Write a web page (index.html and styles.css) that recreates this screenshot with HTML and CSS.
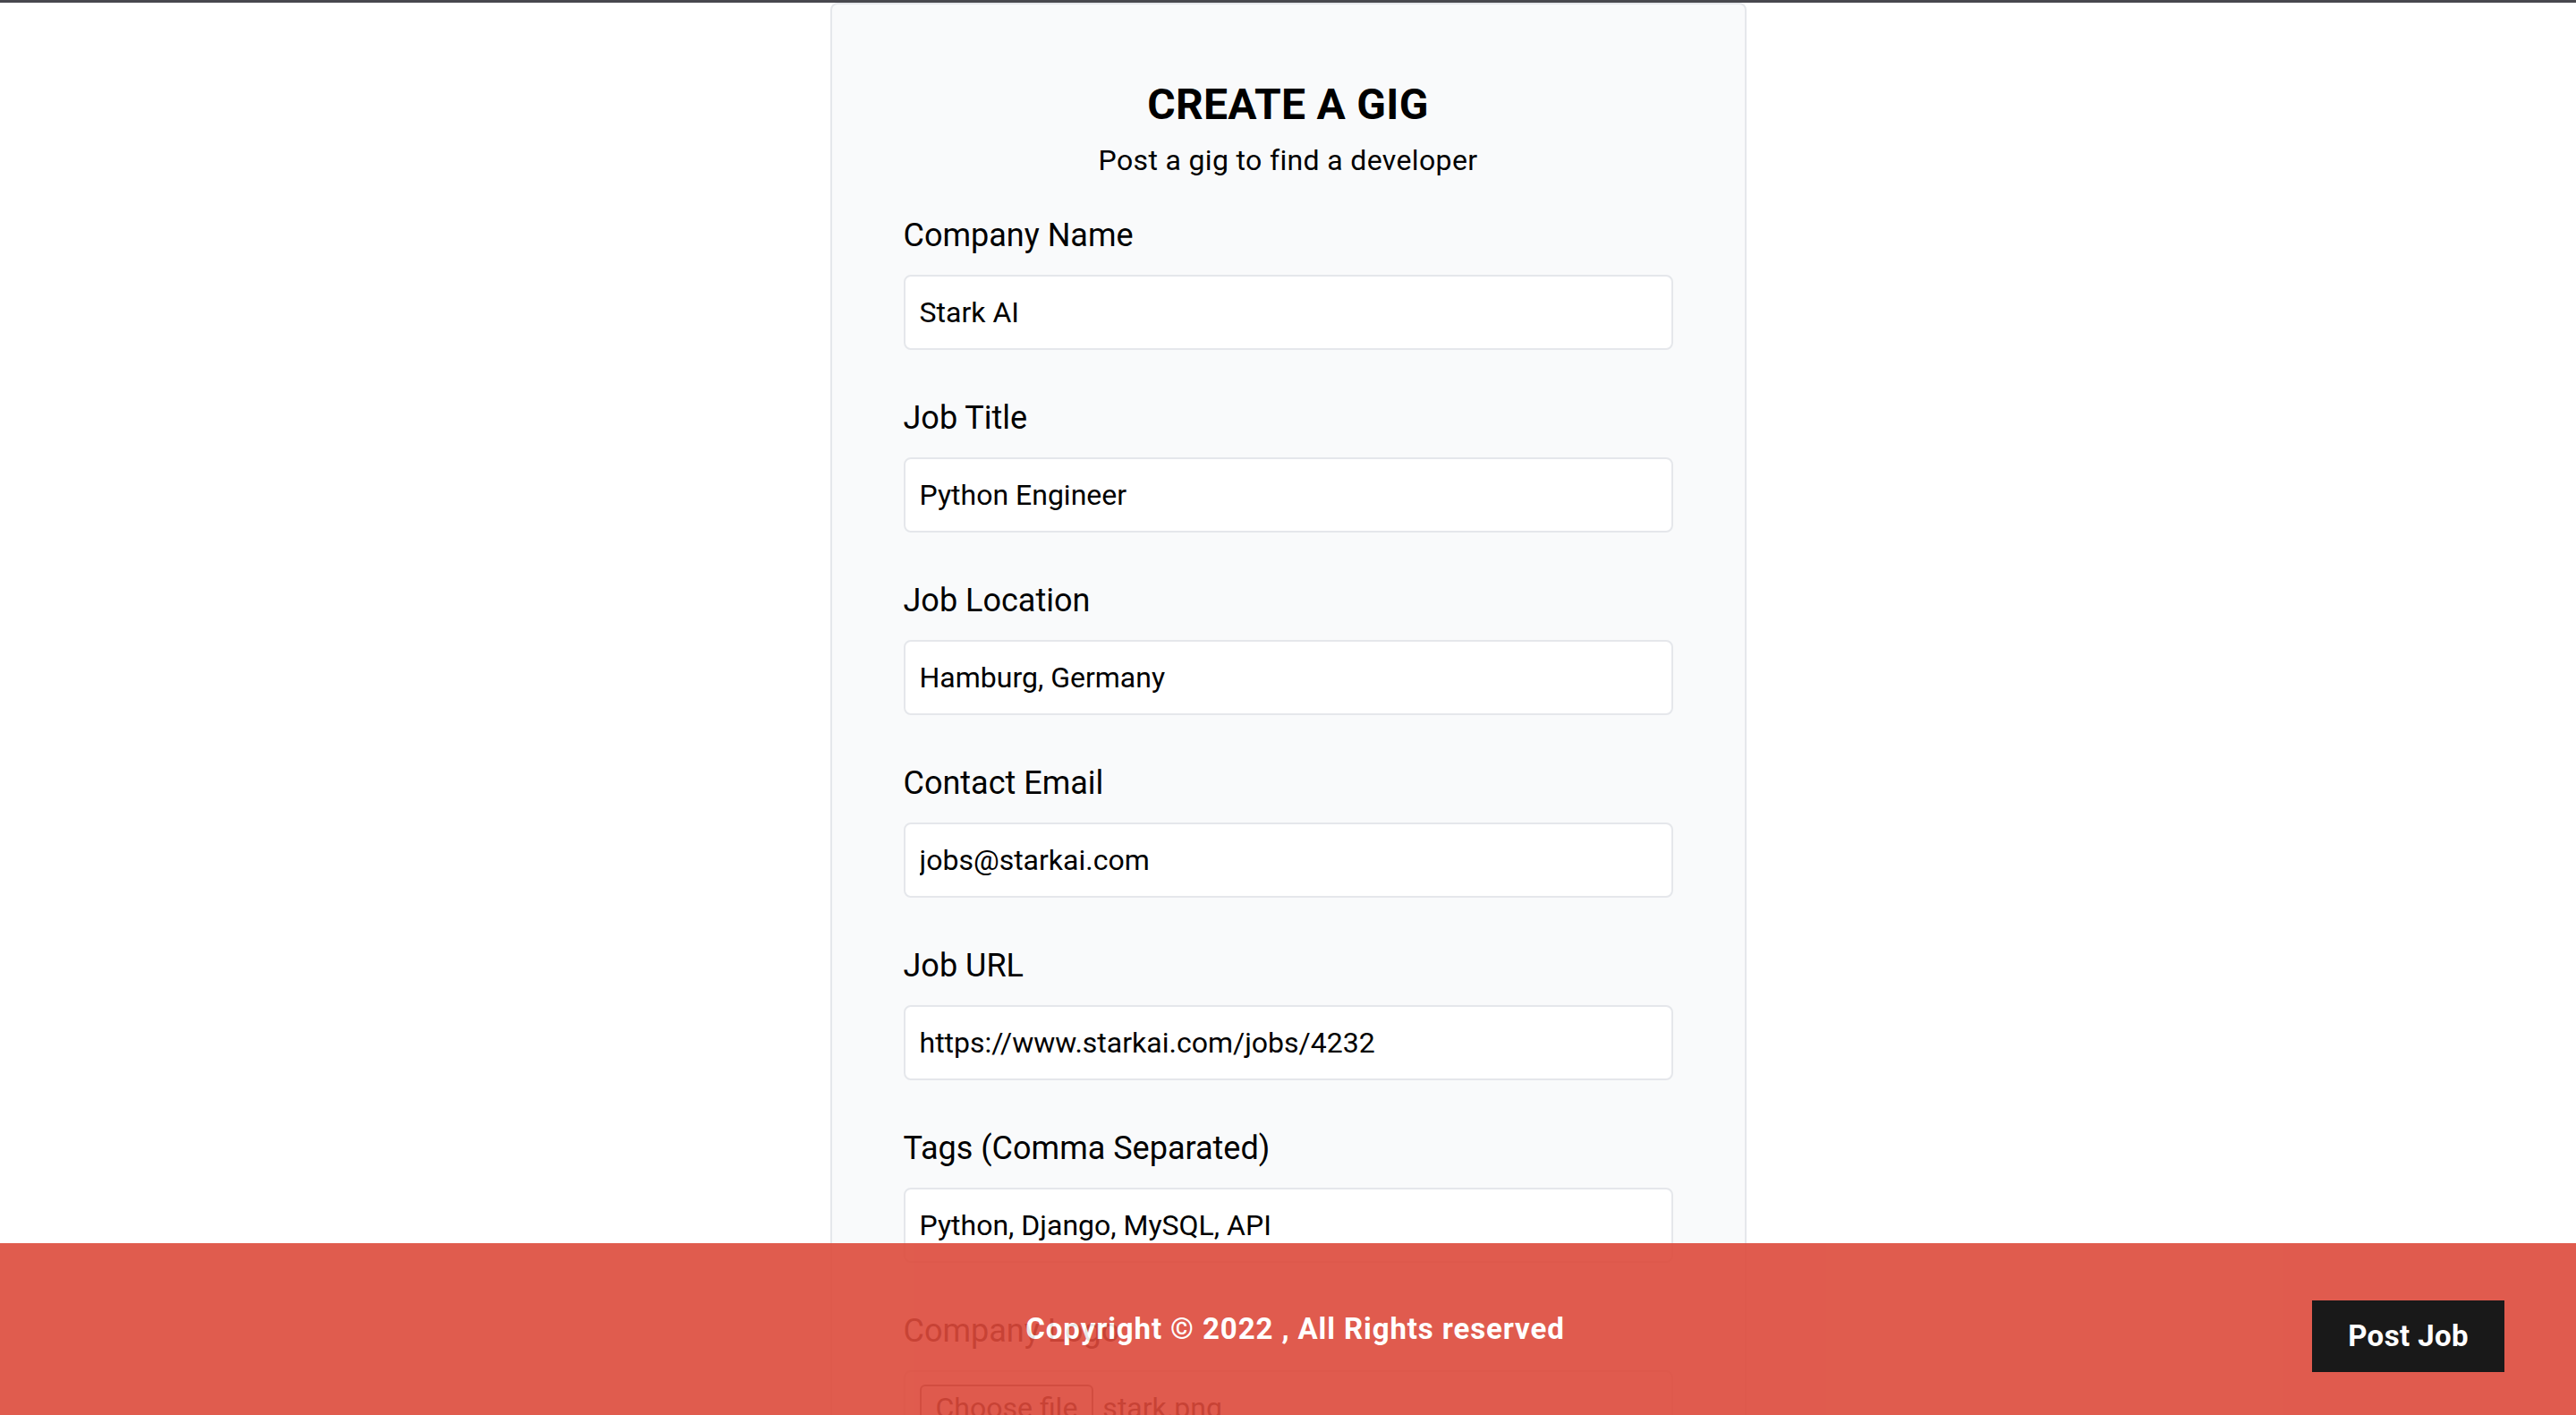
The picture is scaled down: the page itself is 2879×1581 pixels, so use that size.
FILE: index.html
```html
<!DOCTYPE html>
<html lang="en">
<head>
<meta charset="utf-8">
<title>Create a Gig</title>
<link rel="stylesheet" href="styles.css">
</head>
<body>
<div class="topline"></div>
<main class="page">
  <div class="card">
    <header class="card-head">
      <h2 class="title">Create a Gig</h2>
      <p class="subtitle">Post a gig to find a developer</p>
    </header>
    <form class="form">
      <div class="field">
        <label class="label" for="company">Company Name</label>
        <input class="input" id="company" type="text" value="Stark AI">
      </div>
      <div class="field">
        <label class="label" for="title">Job Title</label>
        <input class="input" id="title" type="text" value="Python Engineer">
      </div>
      <div class="field">
        <label class="label" for="location">Job Location</label>
        <input class="input" id="location" type="text" value="Hamburg, Germany">
      </div>
      <div class="field">
        <label class="label" for="email">Contact Email</label>
        <input class="input" id="email" type="text" value="jobs@starkai.com">
      </div>
      <div class="field">
        <label class="label" for="website">Job URL</label>
        <input class="input" id="website" type="text" value="https://www.starkai.com/jobs/4232">
      </div>
      <div class="field">
        <label class="label" for="tags">Tags (Comma Separated)</label>
        <input class="input" id="tags" type="text" value="Python, Django, MySQL, API">
      </div>
      <div class="field">
        <label class="label">Company Logo</label>
        <div class="file-box">
          <span class="file-btn">Choose file</span>
          <span class="file-name">stark.png</span>
        </div>
      </div>
      <div class="field">
        <label class="label" for="description">Job Description</label>
        <textarea class="input textarea" id="description" rows="6">We are looking for a Python engineer.</textarea>
      </div>
      <div class="field actions">
        <button class="submit" type="button">Create Gig</button>
        <a class="back" href="#">Back</a>
      </div>
    </form>
  </div>
</main>
<footer class="footer">
  <p class="copyright">Copyright &copy; 2022 , All Rights reserved</p>
  <a class="post-job" href="#">Post Job</a>
</footer>
</body>
</html>
```

FILE: styles.css
```css
* {
  box-sizing: border-box;
  margin: 0;
  padding: 0;
}

html {
  scrollbar-width: none;
}

html::-webkit-scrollbar {
  display: none;
}

body {
  font-family: Roboto, "Liberation Sans", sans-serif;
  color: #000;
  background: #fff;
  line-height: 1.5;
}

.topline {
  height: 3px;
  background: #48484e;
}

.page {
  display: flex;
  justify-content: center;
}

.card {
  width: 1024px;
  background: #f9fafb;
  border: 2px solid #e5e7eb;
  border-radius: 8px;
  padding: 80px;
}

.card-head {
  text-align: center;
}

.title {
  font-size: 48px;
  line-height: 64px;
  font-weight: 700;
  text-transform: uppercase;
  letter-spacing: 0.3px;
  margin-bottom: 6px;
}

.subtitle {
  font-size: 32px;
  line-height: 48px;
  letter-spacing: 0.35px;
  margin-bottom: 32px;
}

.form {
  display: flex;
  flex-direction: column;
}

.field {
  display: flex;
  flex-direction: column;
  align-items: flex-start;
  margin-bottom: 48px;
}

.label {
  font-size: 36px;
  line-height: 56px;
  margin-bottom: 16px;
}

.input {
  font: inherit;
  font-size: 32px;
  line-height: 48px;
  padding: 16px;
  border: 2px solid #e5e7eb;
  border-radius: 8px;
  background: #fff;
  color: #000;
  width: 100%;
  outline: none;
}

.textarea {
  resize: none;
}

.file-box {
  width: 100%;
  display: flex;
  align-items: center;
  gap: 10px;
  padding: 14px 16px;
  border: 2px solid #e5e7eb;
  border-radius: 8px;
  font-size: 32px;
  line-height: 48px;
}

.file-btn {
  border: 2px solid #767676;
  border-radius: 6px;
  background: #efefef;
  padding: 0 16px;
}

.file-name {
  color: #000;
}

.actions {
  flex-direction: row;
  align-items: center;
  gap: 32px;
}

.submit {
  font: inherit;
  font-size: 32px;
  line-height: 48px;
  background: #ef3b2d;
  color: #fff;
  border: none;
  border-radius: 8px;
  padding: 16px 32px;
}

.back {
  font-size: 32px;
  color: #000;
  text-decoration: none;
}

.footer {
  position: fixed;
  left: 0;
  bottom: 0;
  width: 100%;
  height: 192px;
  display: flex;
  align-items: center;
  justify-content: center;
  background: rgb(221, 74, 59);
  opacity: 0.9;
  color: #fff;
  font-weight: 700;
}

.copyright {
  margin-left: 16px;
  font-size: 33px;
  line-height: 48px;
  letter-spacing: 0.9px;
}

.post-job {
  position: absolute;
  top: 64px;
  right: 80px;
  background: #000;
  color: #fff;
  padding: 16px 40px;
  font-size: 33px;
  line-height: 48px;
  letter-spacing: 0.4px;
  text-decoration: none;
}
```
